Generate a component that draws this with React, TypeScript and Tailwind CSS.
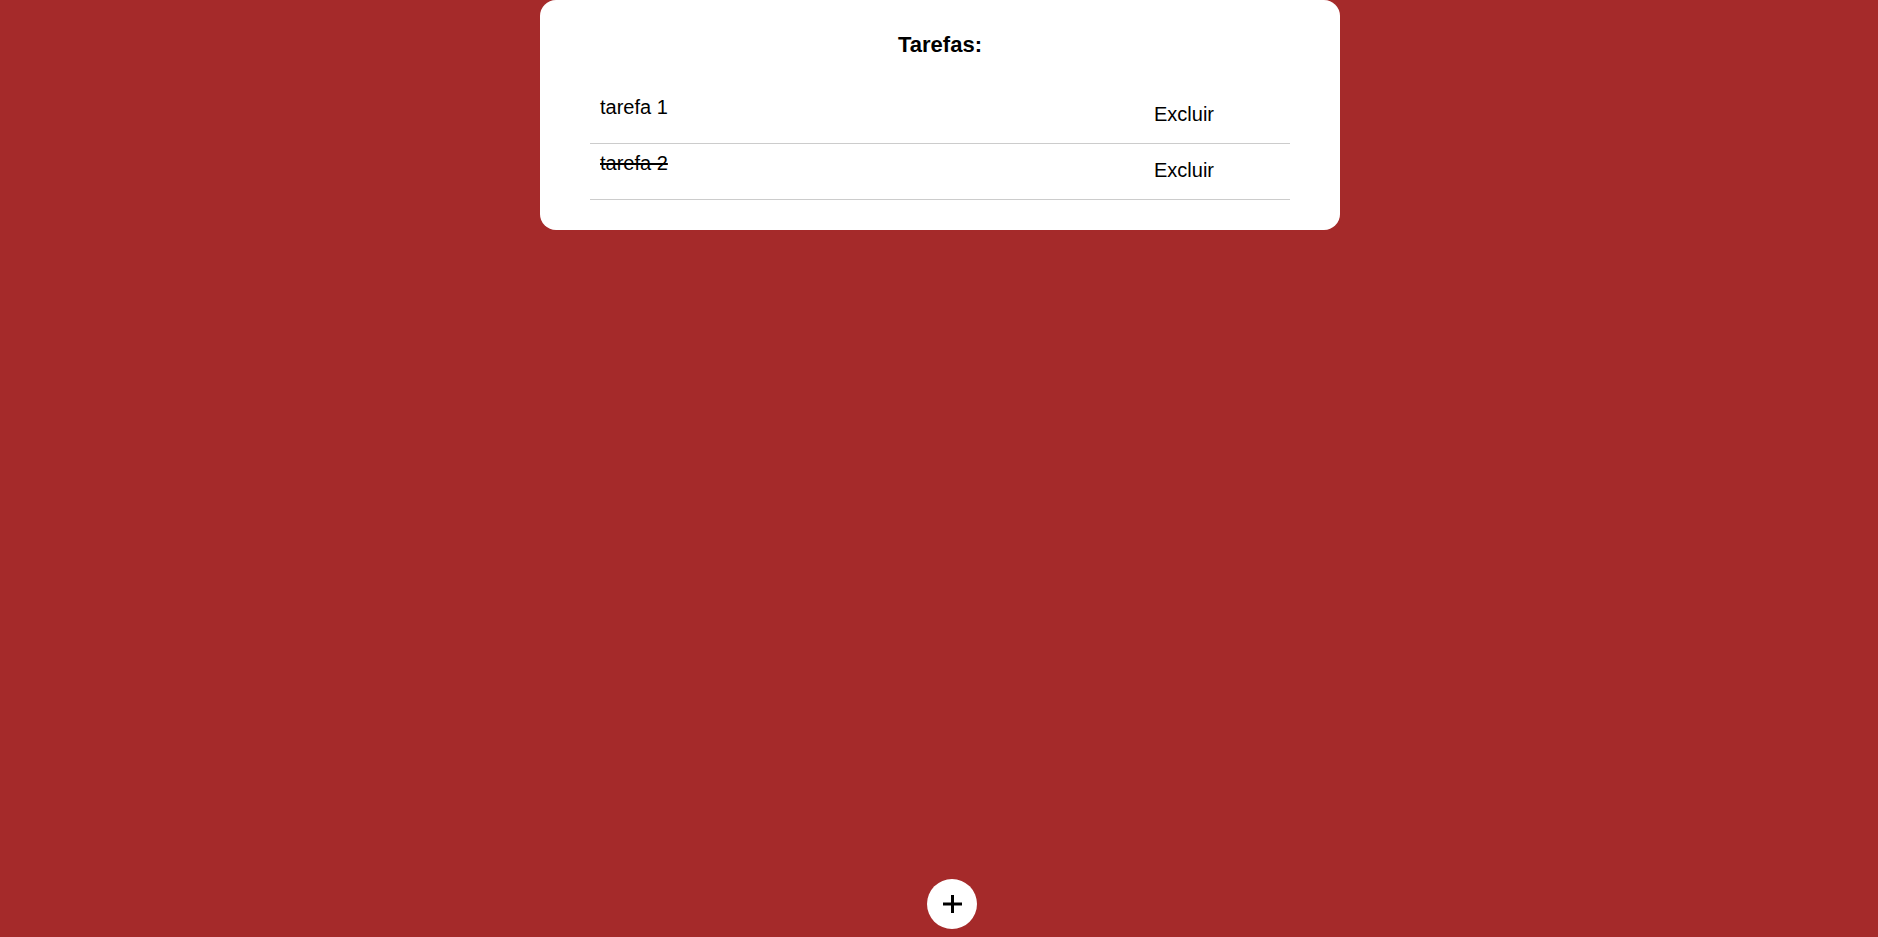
import React, { useState } from "react";

type Task = { id: number; title: string; done: boolean };

export default function App() {
    const [tasks, setTasks] = useState<Task[]>([
        { id: 1, title: "tarefa 1", done: false },
        { id: 2, title: "tarefa 2", done: true },
    ]);

    const removeTask = (id: number) => {
        setTasks((prev) => prev.filter((t) => t.id !== id));
    };

    const toggleTask = (id: number) => {
        setTasks((prev) =>
            prev.map((t) => (t.id === id ? { ...t, done: !t.done } : t))
        );
    };

    return (
        <div className="min-h-screen bg-[#a52a2a] flex flex-col items-center font-['Liberation_Sans',Arial,sans-serif] text-black">
            <div className="w-[800px] ml-[2px] bg-white rounded-[16px] pt-[32px] pb-[30px]">
                <h2 className="text-[22px] leading-[25px] font-bold text-center">
                    Tarefas:
                </h2>
                <ul className="mx-[50px] mt-[31px]">
                    {tasks.map((task) => (
                        <li
                            key={task.id}
                            className="h-[56px] flex items-start justify-between border-b border-[#cccccc]">
                            <span
                                onClick={() => toggleTask(task.id)}
                                className={`ml-[10px] mt-[8px] text-[20px] leading-[23px] cursor-pointer ${
                                    task.done ? "line-through" : ""
                                }`}>
                                {task.title}
                            </span>
                            <button
                                onClick={() => removeTask(task.id)}
                                className="mr-[76px] mt-[15px] text-[20px] leading-[23px] bg-transparent">
                                Excluir
                            </button>
                        </li>
                    ))}
                </ul>
            </div>
            <button className="mt-auto mb-[8px] ml-[26px] w-[50px] h-[50px] rounded-full bg-white grid place-items-center">
                <svg width="19" height="18" viewBox="0 0 19 18">
                    <line x1="0" y1="9" x2="19" y2="9" stroke="black" strokeWidth="3" />
                    <line x1="9.5" y1="0" x2="9.5" y2="18" stroke="black" strokeWidth="3" />
                </svg>
            </button>
        </div>
    );
}
